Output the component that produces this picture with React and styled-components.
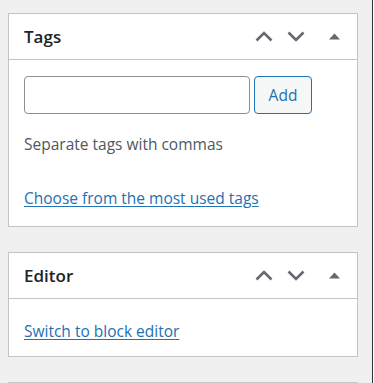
import React from 'react'

import styled, { createGlobalStyle } from 'styled-components'

const GlobalStyle = createGlobalStyle`
  html, body {
    margin: 0;
    background: #fff;
  }
  body {
    font-family: 'Open Sans', 'Noto Sans', sans-serif;
    color: #1d2327;
  }
`

const Sidebar = styled.div`
  width: 373px;
  height: 100vh;
  box-sizing: border-box;
  overflow: hidden;
  padding: 13px 14px 0 8px;
  background: #f0f0f1;
  border-right: 1px solid #2c3338;
  display: flex;
  flex-direction: column;
  gap: 25px;
`

const Panel = styled.div`
  flex-shrink: 0;
  min-height: ${props => props.$minHeight || 0}px;
  background: #fff;
  border: 1px solid #c3c4c7;
`

const PanelHeader = styled.div`
  height: 45px;
  display: flex;
  align-items: center;
  border-bottom: 1px solid #c3c4c7;
`

const Title = styled.h2`
  flex: 1;
  margin: 0;
  padding-left: 15px;
  font-size: 17px;
  font-weight: 600;
  color: #1d2327;
`

const HandleButton = styled.button`
  width: ${props => props.$width}px;
  height: 45px;
  padding: 0;
  border: none;
  background: none;
  display: flex;
  align-items: center;
  justify-content: center;
  color: #646970;
  cursor: pointer;
`

const PanelBody = styled.div`
  padding: ${props => props.$padding};
`

const TagRow = styled.div`
  display: flex;
  gap: 4px;
`

const TagInput = styled.input`
  width: 226px;
  height: 38px;
  box-sizing: border-box;
  border: 1px solid #8c8f94;
  border-radius: 4px;
  padding: 0 8px;
  font: inherit;
  font-size: 15.5px;
`

const AddButton = styled.button`
  width: 58px;
  height: 38px;
  box-sizing: border-box;
  border: 1px solid #2271b1;
  border-radius: 4px;
  background: #f6f7f7;
  color: #2271b1;
  font-family: inherit;
  font-size: 15.5px;
  cursor: pointer;
`

const Hint = styled.p`
  margin: 18px 0 0;
  font-size: 15.5px;
  line-height: 24px;
  color: #50575e;
`

const TextLink = styled.a`
  display: inline-block;
  margin-top: ${props => props.$top}px;
  font-size: 15.5px;
  line-height: 24px;
  color: #2271b1;
  text-decoration: underline;
  text-underline-offset: 2px;
`

const ChevronUp = () => (
  <svg width="18" height="11" viewBox="0 0 18 11">
    <polyline points="1.5,9.5 9,2 16.5,9.5" fill="none" stroke="currentColor" strokeWidth="2.6" />
  </svg>
)

const ChevronDown = () => (
  <svg width="18" height="11" viewBox="0 0 18 11">
    <polyline points="1.5,1.5 9,9 16.5,1.5" fill="none" stroke="currentColor" strokeWidth="2.6" />
  </svg>
)

const Caret = () => (
  <svg width="11" height="7" viewBox="0 0 11 7">
    <polygon points="0,6.5 5.5,0.5 11,6.5" fill="currentColor" />
  </svg>
)

const Handles = () => (
  <>
    <HandleButton $width={32}>
      <ChevronUp />
    </HandleButton>
    <HandleButton $width={32}>
      <ChevronDown />
    </HandleButton>
    <HandleButton $width={45}>
      <Caret />
    </HandleButton>
  </>
)

const App = () => {
  return (
    <>
      <GlobalStyle />
      <Sidebar>
        <Panel>
          <PanelHeader>
            <Title>Tags</Title>
            <Handles />
          </PanelHeader>
          <PanelBody $padding="16px 15px 16px">
            <TagRow>
              <TagInput type="text" />
              <AddButton>Add</AddButton>
            </TagRow>
            <Hint>Separate tags with commas</Hint>
            <TextLink href="#" $top={30}>
              Choose from the most used tags
            </TextLink>
          </PanelBody>
        </Panel>
        <Panel>
          <PanelHeader>
            <Title>Editor</Title>
            <Handles />
          </PanelHeader>
          <PanelBody $padding="20px 15px 13px">
            <TextLink href="#" $top={0}>
              Switch to block editor
            </TextLink>
          </PanelBody>
        </Panel>
        <Panel $minHeight={40} />
      </Sidebar>
    </>
  )
}

export default App
